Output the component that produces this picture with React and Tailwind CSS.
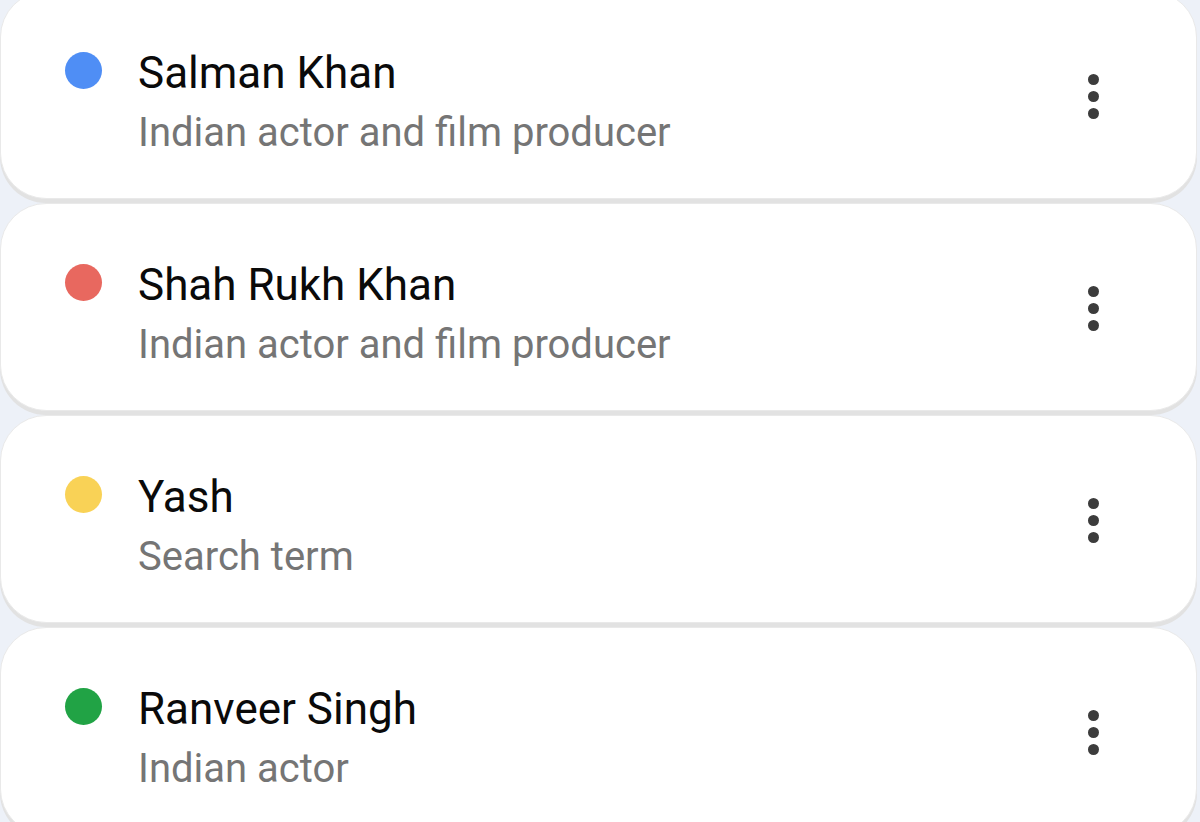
import React from 'react';

const people = [
  { name: 'Salman Khan', desc: 'Indian actor and film producer', dot: 'bg-[#4f8ef5]' },
  { name: 'Shah Rukh Khan', desc: 'Indian actor and film producer', dot: 'bg-[#e8685f]' },
  { name: 'Yash', desc: 'Search term', dot: 'bg-[#f9d256]' },
  { name: 'Ranveer Singh', desc: 'Indian actor', dot: 'bg-[#21a345]' },
];

const Kebab = () => (
  <div className="flex flex-col items-center gap-[6px] w-[12px]">
    <span className="block w-[11px] h-[11px] rounded-full bg-[#3c3c3c]" />
    <span className="block w-[11px] h-[11px] rounded-full bg-[#3c3c3c]" />
    <span className="block w-[11px] h-[11px] rounded-full bg-[#3c3c3c]" />
  </div>
);

const App = () => {
  return (
    <div className="w-[1200px] h-[822px] overflow-hidden bg-[#edf1f8]" style={{ fontFamily: 'Roboto, "Liberation Sans", sans-serif' }}>
      <div className="-mt-[9px] pr-[3px] flex flex-col gap-[4px]">
        {people.map((p) => (
          <div
            key={p.name}
            className="h-[208px] bg-white rounded-[46px] border border-[#e9e9e9] shadow-[0_4px_0_#e2e2e2] flex items-start"
          >
            <div className={`mt-[60px] ml-[64px] w-[37px] h-[37px] rounded-full shrink-0 ${p.dot}`} />
            <div className="ml-[36px] mt-[52px] flex-1">
              <div className="text-[44px] leading-[58px] text-[#0a0a0a]">{p.name}</div>
              <div className="text-[40px] leading-[62px] text-[#757575]">{p.desc}</div>
            </div>
            <div className="mt-[82px] mr-[97px]">
              <Kebab />
            </div>
          </div>
        ))}
      </div>
    </div>
  );
};

export default App;
